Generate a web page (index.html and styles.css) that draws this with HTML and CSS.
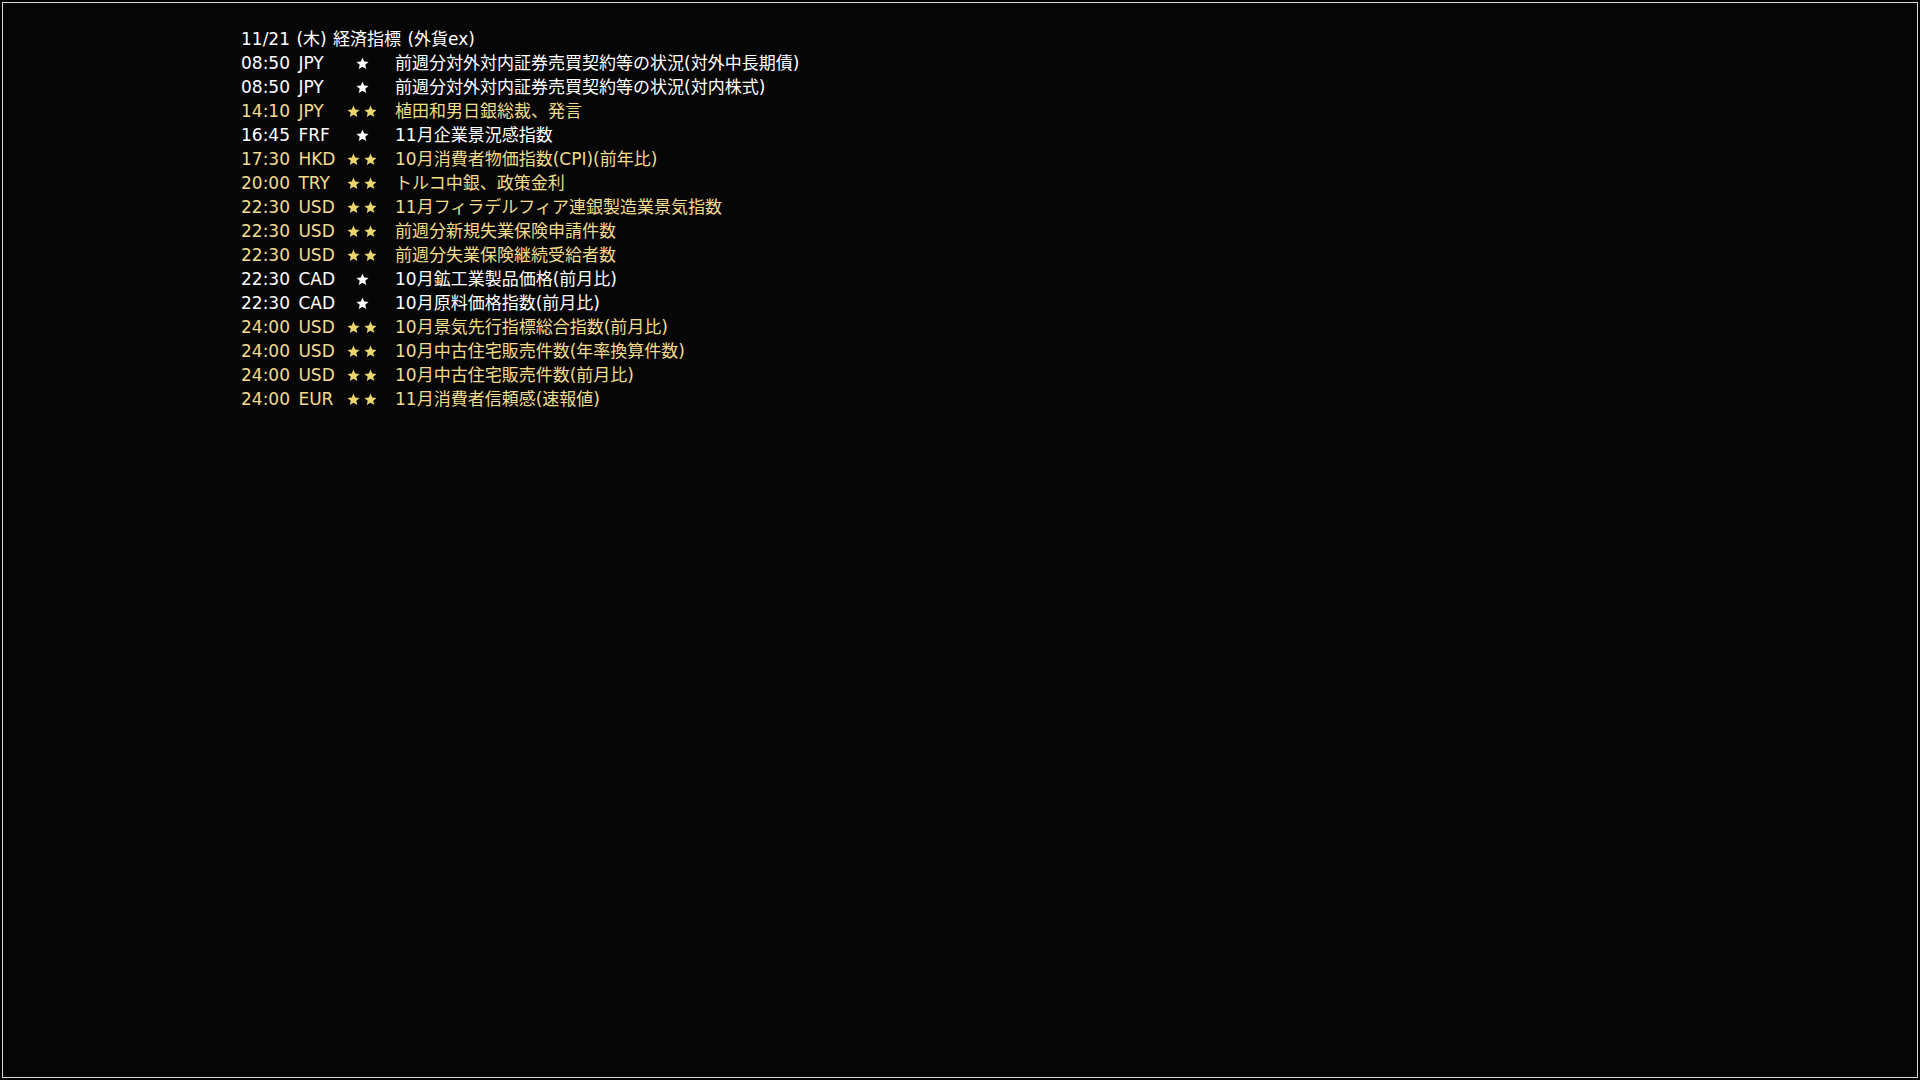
FILE: index.html
```html
<!DOCTYPE html>
<html lang="ja">
<head>
<meta charset="utf-8">
<title>経済指標</title>
<link rel="stylesheet" href="styles.css">
</head>
<body>
<div class="frame">
  <div class="board">
    <div class="title">11/21 (木) 経済指標 (外貨ex)</div>
    <div class="list">
      <div class="row"><span class="time">08:50 JPY</span><span class="stars"><svg class="star" viewBox="0 0 24 24"><path d="M12 1l3.2 7.4 8 .7-6.1 5.3 1.9 7.9L12 18.1 5 22.3l1.9-7.9L.8 9.1l8-.7z"/></svg></span><span class="desc">前週分対外対内証券売買契約等の状況(対外中長期債)</span></div>
      <div class="row"><span class="time">08:50 JPY</span><span class="stars"><svg class="star" viewBox="0 0 24 24"><path d="M12 1l3.2 7.4 8 .7-6.1 5.3 1.9 7.9L12 18.1 5 22.3l1.9-7.9L.8 9.1l8-.7z"/></svg></span><span class="desc">前週分対外対内証券売買契約等の状況(対内株式)</span></div>
      <div class="row hi"><span class="time">14:10 JPY</span><span class="stars"><svg class="star" viewBox="0 0 24 24"><path d="M12 1l3.2 7.4 8 .7-6.1 5.3 1.9 7.9L12 18.1 5 22.3l1.9-7.9L.8 9.1l8-.7z"/></svg><svg class="star" viewBox="0 0 24 24"><path d="M12 1l3.2 7.4 8 .7-6.1 5.3 1.9 7.9L12 18.1 5 22.3l1.9-7.9L.8 9.1l8-.7z"/></svg></span><span class="desc">植田和男日銀総裁、発言</span></div>
      <div class="row"><span class="time">16:45 FRF</span><span class="stars"><svg class="star" viewBox="0 0 24 24"><path d="M12 1l3.2 7.4 8 .7-6.1 5.3 1.9 7.9L12 18.1 5 22.3l1.9-7.9L.8 9.1l8-.7z"/></svg></span><span class="desc">11月企業景況感指数</span></div>
      <div class="row hi"><span class="time">17:30 HKD</span><span class="stars"><svg class="star" viewBox="0 0 24 24"><path d="M12 1l3.2 7.4 8 .7-6.1 5.3 1.9 7.9L12 18.1 5 22.3l1.9-7.9L.8 9.1l8-.7z"/></svg><svg class="star" viewBox="0 0 24 24"><path d="M12 1l3.2 7.4 8 .7-6.1 5.3 1.9 7.9L12 18.1 5 22.3l1.9-7.9L.8 9.1l8-.7z"/></svg></span><span class="desc">10月消費者物価指数(CPI)(前年比)</span></div>
      <div class="row hi"><span class="time">20:00 TRY</span><span class="stars"><svg class="star" viewBox="0 0 24 24"><path d="M12 1l3.2 7.4 8 .7-6.1 5.3 1.9 7.9L12 18.1 5 22.3l1.9-7.9L.8 9.1l8-.7z"/></svg><svg class="star" viewBox="0 0 24 24"><path d="M12 1l3.2 7.4 8 .7-6.1 5.3 1.9 7.9L12 18.1 5 22.3l1.9-7.9L.8 9.1l8-.7z"/></svg></span><span class="desc">トルコ中銀、政策金利</span></div>
      <div class="row hi"><span class="time">22:30 USD</span><span class="stars"><svg class="star" viewBox="0 0 24 24"><path d="M12 1l3.2 7.4 8 .7-6.1 5.3 1.9 7.9L12 18.1 5 22.3l1.9-7.9L.8 9.1l8-.7z"/></svg><svg class="star" viewBox="0 0 24 24"><path d="M12 1l3.2 7.4 8 .7-6.1 5.3 1.9 7.9L12 18.1 5 22.3l1.9-7.9L.8 9.1l8-.7z"/></svg></span><span class="desc">11月フィラデルフィア連銀製造業景気指数</span></div>
      <div class="row hi"><span class="time">22:30 USD</span><span class="stars"><svg class="star" viewBox="0 0 24 24"><path d="M12 1l3.2 7.4 8 .7-6.1 5.3 1.9 7.9L12 18.1 5 22.3l1.9-7.9L.8 9.1l8-.7z"/></svg><svg class="star" viewBox="0 0 24 24"><path d="M12 1l3.2 7.4 8 .7-6.1 5.3 1.9 7.9L12 18.1 5 22.3l1.9-7.9L.8 9.1l8-.7z"/></svg></span><span class="desc">前週分新規失業保険申請件数</span></div>
      <div class="row hi"><span class="time">22:30 USD</span><span class="stars"><svg class="star" viewBox="0 0 24 24"><path d="M12 1l3.2 7.4 8 .7-6.1 5.3 1.9 7.9L12 18.1 5 22.3l1.9-7.9L.8 9.1l8-.7z"/></svg><svg class="star" viewBox="0 0 24 24"><path d="M12 1l3.2 7.4 8 .7-6.1 5.3 1.9 7.9L12 18.1 5 22.3l1.9-7.9L.8 9.1l8-.7z"/></svg></span><span class="desc">前週分失業保険継続受給者数</span></div>
      <div class="row"><span class="time">22:30 CAD</span><span class="stars"><svg class="star" viewBox="0 0 24 24"><path d="M12 1l3.2 7.4 8 .7-6.1 5.3 1.9 7.9L12 18.1 5 22.3l1.9-7.9L.8 9.1l8-.7z"/></svg></span><span class="desc">10月鉱工業製品価格(前月比)</span></div>
      <div class="row"><span class="time">22:30 CAD</span><span class="stars"><svg class="star" viewBox="0 0 24 24"><path d="M12 1l3.2 7.4 8 .7-6.1 5.3 1.9 7.9L12 18.1 5 22.3l1.9-7.9L.8 9.1l8-.7z"/></svg></span><span class="desc">10月原料価格指数(前月比)</span></div>
      <div class="row hi"><span class="time">24:00 USD</span><span class="stars"><svg class="star" viewBox="0 0 24 24"><path d="M12 1l3.2 7.4 8 .7-6.1 5.3 1.9 7.9L12 18.1 5 22.3l1.9-7.9L.8 9.1l8-.7z"/></svg><svg class="star" viewBox="0 0 24 24"><path d="M12 1l3.2 7.4 8 .7-6.1 5.3 1.9 7.9L12 18.1 5 22.3l1.9-7.9L.8 9.1l8-.7z"/></svg></span><span class="desc">10月景気先行指標総合指数(前月比)</span></div>
      <div class="row hi"><span class="time">24:00 USD</span><span class="stars"><svg class="star" viewBox="0 0 24 24"><path d="M12 1l3.2 7.4 8 .7-6.1 5.3 1.9 7.9L12 18.1 5 22.3l1.9-7.9L.8 9.1l8-.7z"/></svg><svg class="star" viewBox="0 0 24 24"><path d="M12 1l3.2 7.4 8 .7-6.1 5.3 1.9 7.9L12 18.1 5 22.3l1.9-7.9L.8 9.1l8-.7z"/></svg></span><span class="desc">10月中古住宅販売件数(年率換算件数)</span></div>
      <div class="row hi"><span class="time">24:00 USD</span><span class="stars"><svg class="star" viewBox="0 0 24 24"><path d="M12 1l3.2 7.4 8 .7-6.1 5.3 1.9 7.9L12 18.1 5 22.3l1.9-7.9L.8 9.1l8-.7z"/></svg><svg class="star" viewBox="0 0 24 24"><path d="M12 1l3.2 7.4 8 .7-6.1 5.3 1.9 7.9L12 18.1 5 22.3l1.9-7.9L.8 9.1l8-.7z"/></svg></span><span class="desc">10月中古住宅販売件数(前月比)</span></div>
      <div class="row hi"><span class="time">24:00 EUR</span><span class="stars"><svg class="star" viewBox="0 0 24 24"><path d="M12 1l3.2 7.4 8 .7-6.1 5.3 1.9 7.9L12 18.1 5 22.3l1.9-7.9L.8 9.1l8-.7z"/></svg><svg class="star" viewBox="0 0 24 24"><path d="M12 1l3.2 7.4 8 .7-6.1 5.3 1.9 7.9L12 18.1 5 22.3l1.9-7.9L.8 9.1l8-.7z"/></svg></span><span class="desc">11月消費者信頼感(速報値)</span></div>
    </div>
  </div>
</div>
</body>
</html>
```

FILE: styles.css
```css
html, body {
  margin: 0;
  padding: 0;
  width: 1920px;
  height: 1080px;
  background: #000;
  overflow: hidden;
}

.frame {
  box-sizing: border-box;
  width: 1916px;
  height: 1076px;
  margin: 2px;
  border: 1px solid #d8d8d8;
  background: #060606;
}

.board {
  padding: 24px 0 0 238px;
  font-family: "DejaVu Sans", "Noto Sans CJK JP", sans-serif;
  font-size: 17px;
  line-height: 24px;
  color: #ffffff;
}

.title {
  white-space: nowrap;
  word-spacing: 1px;
}

.list {
  display: flex;
  flex-direction: column;
}

.row {
  display: grid;
  grid-template-columns: 101px 40px 1fr;
  align-items: center;
  height: 24px;
  white-space: nowrap;
}

.time {
  word-spacing: 3px;
}

.row.hi {
  color: #f3dc8c;
}

.stars {
  display: flex;
  justify-content: center;
  align-items: center;
  gap: 4px;
  height: 24px;
  padding-top: 1px;
  box-sizing: border-box;
}

.star {
  width: 13px;
  height: 13px;
  fill: #ffffff;
}

.row.hi .star {
  fill: #ecd46e;
}

.desc {
  padding-left: 13px;
}
```
